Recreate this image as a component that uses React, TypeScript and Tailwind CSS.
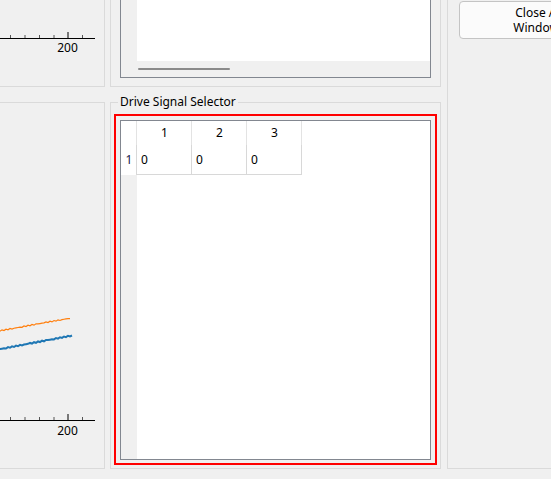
import React from "react";

const FONT = { fontFamily: '"Noto Sans", "Open Sans", Arial, sans-serif' };

// little wobble so the traces look like sampled data, not straight lines
function trace(x0: number, y0: number, x1: number, y1: number, amp: number, seed: number) {
  const pts: string[] = [];
  for (let x = x0; x <= x1; x += 2) {
    const t = (x - x0) / (x1 - x0);
    const y = y0 + (y1 - y0) * t + Math.round(Math.sin(x * 1.7 + seed) * amp * 2) / 2;
    pts.push(`${x},${y}`);
  }
  return pts.join(" ");
}

const TICKS = [10.5, 25, 39.5, 54, 82.5];

function Axis({ y, labelY }: { y: number; labelY: number }) {
  return (
    <g>
      <line x1={-9} y1={y + 0.5} x2={95} y2={y + 0.5} stroke="#000" strokeWidth={1} />
      {TICKS.map((t) => (
        <line key={t} x1={t} y1={y - 3} x2={t} y2={y} stroke="#555" strokeWidth={1} />
      ))}
      <line x1={68} y1={y - 6} x2={68} y2={y} stroke="#000" strokeWidth={1} />
      <text x={67.5} y={labelY} textAnchor="middle" fontSize={12} fill="#000" style={FONT}>
        200
      </text>
    </g>
  );
}

function Panel({ className, children }: { className?: string; children?: React.ReactNode }) {
  return <div className={"border border-[#dadada] bg-[#f0f0f0] " + (className ?? "")}>{children}</div>;
}

function SignalTable() {
  return (
    <div className="flex h-full flex-col border border-[#828790] bg-white text-[12px] leading-none text-black">
      <div className="flex h-[24px] shrink-0">
        <div className="w-[16px] border-r border-[#e3e3e3]" />
        {["1", "2", "3"].map((c) => (
          <div key={c} className="flex w-[55px] items-center justify-center border-r border-[#e3e3e3] pl-px text-black">
            {c}
          </div>
        ))}
      </div>
      <div className="flex h-[30px] shrink-0">
        <div className="flex w-[16px] items-center justify-center border-r border-[#d8d8d8] pl-px text-[#1a1a4a]">1</div>
        {[0, 1, 2].map((i) => (
          <div key={i} className="flex w-[55px] items-center border-r border-b border-[#d8d8d8] pl-[4px]">
            0
          </div>
        ))}
      </div>
      <div className="flex flex-1">
        <div className="w-[16px] bg-[#f0f0f0]" />
        <div className="flex-1 bg-white" />
      </div>
    </div>
  );
}

export default function App() {
  return (
    <div className="h-[479px] w-[551px] overflow-hidden bg-[#f0f0f0] text-[12px] text-black" style={FONT}>
      <div className="-mt-[20px] flex h-[489px] items-start">
        {/* left column: plots */}
        <div className="-ml-[10px] flex w-[115px] shrink-0 flex-col gap-[15px]">
          <Panel className="h-[107px]">
            <svg width={113} height={105} viewBox="-9 -19 113 105" className="block">
              <Axis y={38} labelY={52} />
            </svg>
          </Panel>
          <Panel className="h-[367px]">
            <svg width={113} height={365} viewBox="-9 103 113 365" className="block">
              <polyline points={trace(-10, 332.5, 71, 318, 0.5, 1)} fill="none" stroke="#ff7f0e" strokeWidth={1.2} />
              <polyline points={trace(-10, 351, 72, 335.5, 0.6, 3)} fill="none" stroke="#1f77b4" strokeWidth={2} />
              <Axis y={420} labelY={435} />
            </svg>
          </Panel>
        </div>

        {/* middle column */}
        <div className="ml-[5px] flex w-[331px] shrink-0 flex-col gap-[7px]">
          <Panel className="h-[107px] px-[9px] pb-[8px]">
            <div className="flex h-full flex-col border border-[#828790] bg-white">
              <div className="flex flex-1">
                <div className="w-[16px] bg-[#f0f0f0]" />
                <div className="flex-1 bg-white" />
              </div>
              <div className="flex h-[16px] items-center bg-[#f0f0f0] pl-[17px]">
                <div className="h-[2px] w-[92px] rounded-full bg-[#8a8a8a]" />
              </div>
            </div>
          </Panel>
          <fieldset className="h-[375px] min-w-0 border border-[#dadada] px-[3px] pt-[4px] pb-[3px]">
            <legend className="ml-[4px] px-[2px] text-[12px] leading-4">Drive Signal Selector</legend>
            <div className="h-[351px] border-2 border-[#ff0000] px-[4px] pt-[4px] pb-[3px]">
              <SignalTable />
            </div>
          </fieldset>
        </div>

        {/* right column */}
        <Panel className="ml-[6px] h-[489px] w-[200px] shrink-0 pl-[11px] pt-[20px]">
          <button className="flex h-[38px] w-[160px] flex-col items-center justify-center rounded-[4px] border border-[#c4c4c4] bg-[#fbfbfb] text-[12px] leading-[15px] text-black">
            <span>Close All</span>
            <span>Windows</span>
          </button>
        </Panel>
      </div>
    </div>
  );
}
